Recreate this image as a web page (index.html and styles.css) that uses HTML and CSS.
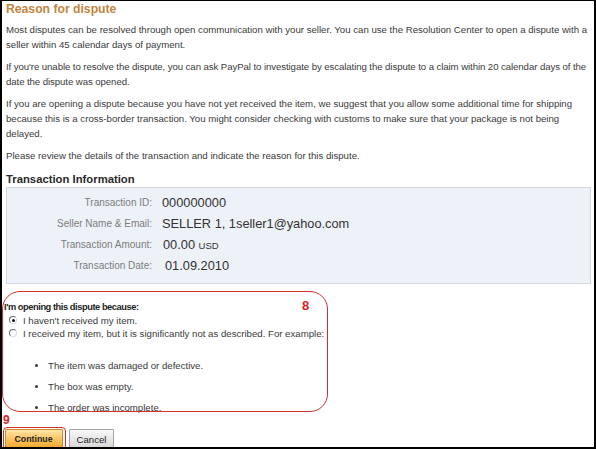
FILE: index.html
```html
<!DOCTYPE html>
<html lang="en">
<head>
<meta charset="utf-8">
<title>Reason for dispute</title>
<link rel="stylesheet" href="styles.css">
</head>
<body>
<div class="frame">
  <main class="page">
    <h1 class="title">Reason for dispute</h1>
    <p class="text">Most disputes can be resolved through open communication with your seller. You can use the Resolution Center to open a dispute with a seller within 45 calendar days of payment.</p>
    <p class="text text-tight">If you're unable to resolve the dispute, you can ask PayPal to investigate by escalating the dispute to a claim within 20 calendar days of the date the dispute was opened.</p>
    <p class="text">If you are opening a dispute because you have not yet received the item, we suggest that you allow some additional time for shipping because this is a cross-border transaction. You might consider checking with customs to make sure that your package is not being delayed.</p>
    <p class="text">Please review the details of the transaction and indicate the reason for this dispute.</p>

    <h2 class="section-title">Transaction Information</h2>
    <div class="info">
      <div class="info-label">Transaction ID:</div>
      <div class="info-value">000000000</div>
      <div class="info-label">Seller Name &amp; Email:</div>
      <div class="info-value">SELLER 1, 1seller1@yahoo.com</div>
      <div class="info-label">Transaction Amount:</div>
      <div class="info-value info-value-shift1">00.00 <span class="currency">USD</span></div>
      <div class="info-label">Transaction Date:</div>
      <div class="info-value info-value-shift2">01.09.2010</div>
    </div>

    <section class="reasons">
      <div class="annot-box"></div>
      <span class="annot-num annot-8">8</span>
      <h3 class="reasons-title">I'm opening this dispute because:</h3>
      <label class="choice"><span class="radio radio-checked"></span>I haven't received my item.</label>
      <label class="choice"><span class="radio"></span>I received my item, but it is significantly not as described. For example:</label>
      <ul class="examples">
        <li>The item was damaged or defective.</li>
        <li>The box was empty.</li>
        <li>The order was incomplete.</li>
      </ul>
    </section>

    <div class="actions">
      <span class="annot-num annot-9">9</span>
      <span class="annot-btn"><button class="btn btn-primary" type="button">Continue</button></span>
      <button class="btn btn-secondary" type="button">Cancel</button>
    </div>
  </main>
</div>
</body>
</html>
```

FILE: styles.css
```css
* {
  box-sizing: border-box;
}

html, body {
  margin: 0;
  padding: 0;
  background: #ffffff;
}

body {
  font-family: "Liberation Sans", Arial, sans-serif;
  color: #333333;
}

.frame {
  width: 596px;
  height: 449px;
  border-style: solid;
  border-color: #000000;
  border-width: 1px 2px 2px 2px;
  overflow: hidden;
  background: #ffffff;
}

.page {
  padding: 0 3px 0 4px;
}

.title {
  margin: 0 0 4.5px;
  font-size: 12.2px;
  line-height: 16px;
  font-weight: bold;
  color: #c3843f;
}

.text {
  margin: 0 0 7px;
  font-size: 9.65px;
  line-height: 15px;
  color: #3a3a3a;
}

.text-tight {
  letter-spacing: -0.08px;
}

.section-title {
  margin: 8.5px 0 0;
  font-size: 11.3px;
  line-height: 16px;
  font-weight: bold;
  color: #2a2a2a;
}

.info {
  display: grid;
  grid-template-columns: 145px 1fr;
  grid-auto-rows: 21px;
  column-gap: 10px;
  align-items: center;
  padding: 4px 0 7px;
  background: #edf1f8;
  border: 1px solid #d3d7dc;
}

.info-label {
  text-align: right;
  font-size: 10px;
  color: #7d7d7d;
}

.info-value {
  font-size: 12.8px;
  color: #333333;
}

.info-value-shift1 {
  padding-left: 1px;
}

.info-value-shift2 {
  padding-left: 3px;
}

.currency {
  font-size: 9.5px;
}

.reasons {
  position: relative;
  margin-top: 7px;
  padding-top: 9.5px;
}

.annot-box {
  position: absolute;
  top: 0;
  left: -4px;
  width: 326px;
  height: 120.5px;
  border: 1.5px solid #d0302c;
  border-radius: 18px;
  pointer-events: none;
}

.annot-num {
  position: absolute;
  font-weight: bold;
  color: #e0201c;
  line-height: 1;
}

.annot-8 {
  top: 8px;
  left: 296px;
  font-size: 13px;
}

.annot-9 {
  top: -13px;
  left: -3px;
  font-size: 12px;
}

.reasons-title {
  margin: 0 0 0 -2px;
  font-size: 9.3px;
  letter-spacing: -0.45px;
  line-height: 13px;
  font-weight: bold;
  color: #1e1e1e;
}

.choice {
  display: flex;
  align-items: center;
  height: 13px;
  padding-left: 3px;
  font-size: 9.65px;
  color: #3a3a3a;
}

.radio {
  position: relative;
  flex: none;
  width: 8px;
  height: 8px;
  margin-right: 6px;
  border-radius: 50%;
  border: 1px solid;
  border-color: #6c6c6c #d8d8d8 #d8d8d8 #6c6c6c;
  background: #ffffff;
}

.radio-checked::after {
  content: "";
  position: absolute;
  top: 1.5px;
  left: 1.5px;
  width: 3px;
  height: 3px;
  border-radius: 50%;
  background: #111111;
}

.examples {
  margin: 18px 0 0;
  padding-left: 42px;
  font-size: 9.65px;
  line-height: 15px;
  color: #3a3a3a;
}

.examples li + li {
  margin-top: 6px;
}

.actions {
  position: relative;
  display: flex;
  align-items: flex-start;
  margin-top: 12.5px;
}

.annot-btn {
  display: inline-flex;
  margin-left: -3px;
  margin-right: 3px;
  padding: 0.5px 2.5px 0.5px 0.5px;
  border: 1.5px solid #d0302c;
  border-radius: 4px;
}

.btn {
  height: 20px;
  margin: 0;
  padding: 0;
  font-family: "Liberation Sans", Arial, sans-serif;
  color: #222222;
  border-radius: 1px;
}

.btn-primary {
  width: 58px;
  font-size: 8.8px;
  font-weight: bold;
  border: 1px solid #c98a2c;
  background: linear-gradient(#fde6a6 0%, #fbc868 45%, #f3a52c 100%);
}

.btn-secondary {
  width: 45px;
  margin-top: 2px;
  font-size: 9.6px;
  border: 1px solid #a3a3a3;
  background: linear-gradient(#f8f8f8 0%, #e6e6e6 55%, #d6d6d6 100%);
}
```
